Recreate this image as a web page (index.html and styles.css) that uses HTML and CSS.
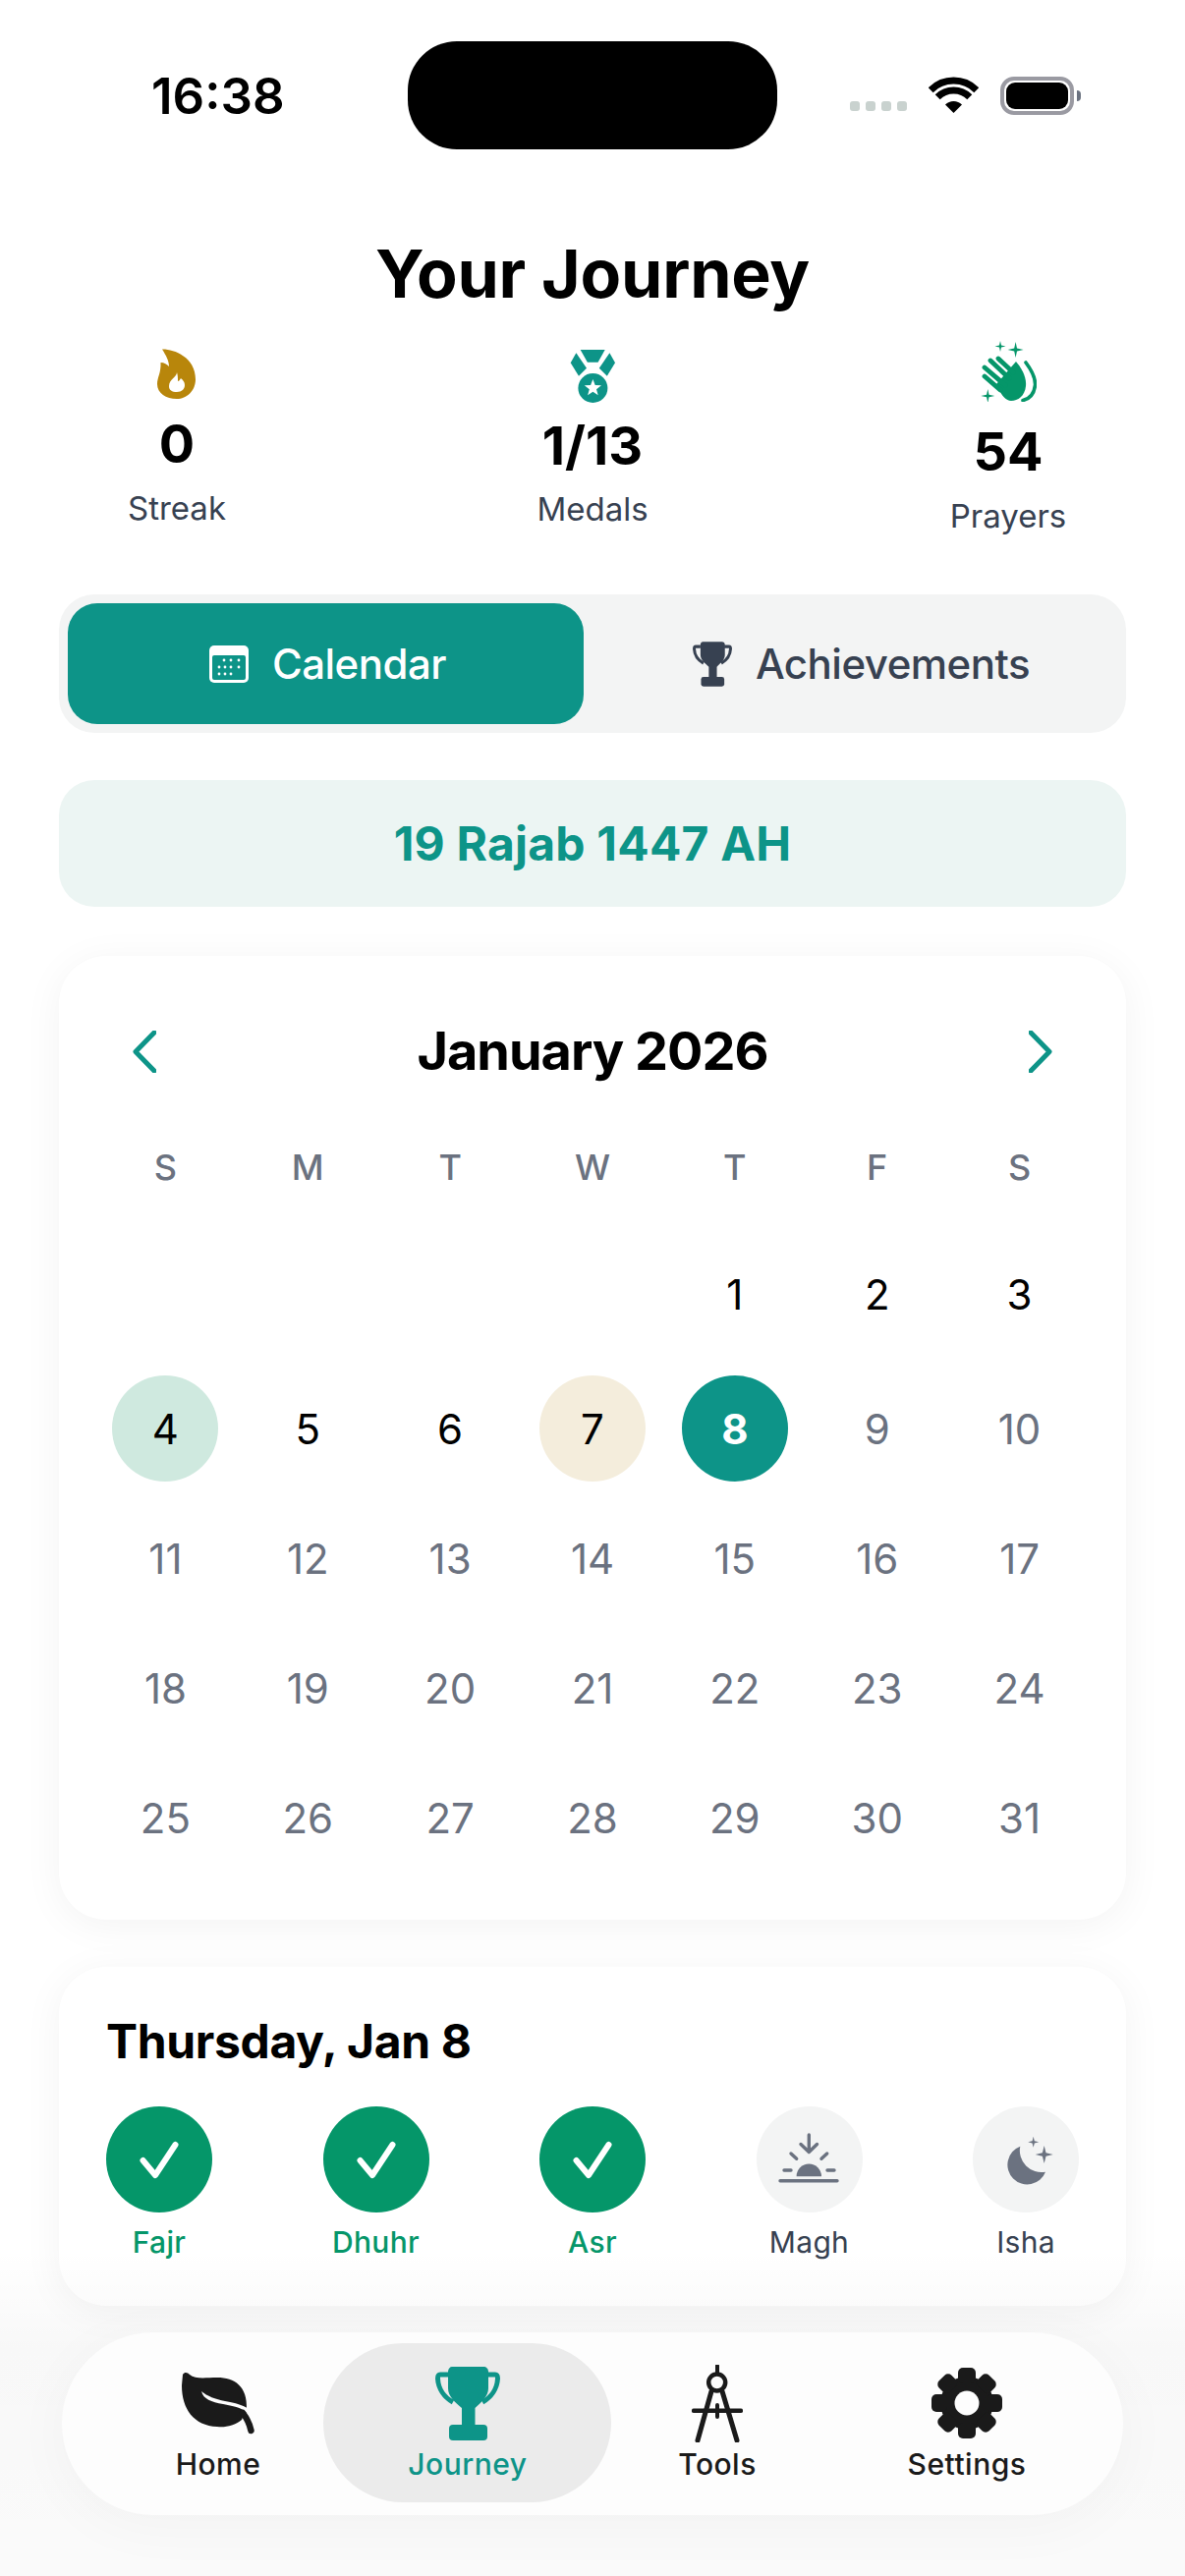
FILE: index.html
```html
<!DOCTYPE html>
<html lang="en">
<head>
<meta charset="utf-8">
<title>Your Journey</title>
<link rel="stylesheet" href="styles.css">
</head>
<body>
<div class="page">
  <header class="status">
    <div class="time">16:38</div>
    <div class="island"></div>
    <div class="status-right">
      <div class="dots"><i></i><i></i><i></i><i></i></div>
      <svg class="wifi" viewBox="0 0 51 37"><path d="M2.2 13.7A33 33 0 0 1 48.8 13.7" fill="none" stroke="#000" stroke-width="7"/><path d="M9.2 20.7A23 23 0 0 1 41.8 20.7" fill="none" stroke="#000" stroke-width="7"/><path d="M25.5 37L17 28.5A12 12 0 0 1 34 28.5Z"/></svg>
      <div class="battery"><div class="battery-fill"></div></div>
    </div>
  </header>

  <h1 class="title">Your Journey</h1>

  <section class="stats">
    <div class="stat stat-streak">
      <svg class="stat-icon" width="40" height="52" viewBox="0 0 40 52"><path fill="#b8860b" fill-rule="evenodd" d="M5 .5C16 0 39 8 39 31C39 43 30 51 20 51C9 51 0 45 0 36C0 29 4 25 3.500 14C7 14 10 16 12 18C12 12 9 7 5 .5ZM20 24C20 29 12 31 12 38C12 42 15 44 20 44C25 44 28 41 28 37C28 33 25 31 24 30C23 32 22 33 21 33C21 30 21 27 20 24Z"/></svg>
      <div class="stat-value">0</div>
      <div class="stat-label">Streak</div>
    </div>
    <div class="stat stat-medal">
      <svg class="stat-icon" width="47" height="54" viewBox="0 0 47 54"><g fill="#0d9488"><path d="M10.700 0H35.700L28.600 12.700H17.900Z"/><path d="M6.400 3.300L.7 13.300L9 26.700L17 18.700Z"/><path d="M40.400 3.300L46 13.300L37.800 26.700L29.800 18.700Z"/><circle cx="23.400" cy="39" r="15"/></g><path fill="#fff" d="M23.400 30L25.700 36L32 36.200L27 40.200L28.700 46.300L23.400 42.800L18.100 46.300L19.800 40.200L14.800 36.200L21.100 36Z"/></svg>
      <div class="stat-value">1/13</div>
      <div class="stat-label">Medals</div>
    </div>
    <div class="stat stat-prayers">
      <svg class="stat-icon" width="57" height="62" viewBox="0 0 57 62"><g fill="#059669"><path d="M20 0L21 4.500L25.500 5.500L21 6.500L20 11L19 6.500L14.500 5.500L19 4.500Z"/><path d="M35.600 1L37 7.600L43.600 9L37 10.400L35.600 17L34.200 10.400L27.600 9L34.200 7.600Z"/><path d="M7.300 49L8.500 54.800L14.300 56L8.500 57.200L7.300 63L6.100 57.200L.3 56L6.100 54.800Z"/><path d="M16 44L29 29L36 21C41 27 47 36 46 46C45 56 38 61 31 61C25 61 20 54 16 44Z"/></g><g fill="none" stroke="#059669" stroke-linecap="round" stroke-width="4.800"><path d="M4 36L20 50"/><path d="M4 27L25 45"/><path d="M10 20L29 38"/><path d="M18 18L33 32"/></g><path fill="none" stroke="#059669" stroke-linecap="round" stroke-width="3.600" d="M46 22C52 30 56 37 55.500 45C54.500 54 50 59 43 60.500"/></svg>
      <div class="stat-value">54</div>
      <div class="stat-label">Prayers</div>
    </div>
  </section>

  <nav class="tabs">
    <div class="tab tab-active">
      <svg class="tab-icon" width="40" height="38" viewBox="0 0 40 38"><rect width="40" height="38" rx="5" fill="#fff"/><rect x="3" y="10" width="34" height="25" rx="2" fill="#0d9488"/><g fill="#fff"><circle cx="15" cy="15" r="1.400"/><circle cx="22" cy="15" r="1.400"/><circle cx="30" cy="15" r="1.400"/><circle cx="10" cy="22" r="1.400"/><circle cx="16" cy="22" r="1.400"/><circle cx="22" cy="22" r="1.400"/><circle cx="30" cy="22" r="1.400"/><circle cx="10" cy="29" r="1.400"/><circle cx="16" cy="29" r="1.400"/><circle cx="22" cy="29" r="1.400"/></g></svg>
      <span>Calendar</span>
    </div>
    <div class="tab">
      <svg class="tab-icon" width="40" height="46" viewBox="0 0 66 75"><g fill="#374151"><path d="M17 0H49C52 0 54 2 54 5V22C54 30 47 36 40.500 42V59H27V42C20 36 13 30 13 22V5C13 2 15 0 17 0Z"/><rect x="14" y="59" width="39" height="16" rx="4"/></g><path fill="none" stroke="#374151" stroke-width="5" d="M13 8H5C2.500 8 2.500 10 2.500 12C3 22 9 31 18 36M53 8H61C63.500 8 63.500 10 63.500 12C63 22 57 31 48 36"/></svg>
      <span>Achievements</span>
    </div>
  </nav>

  <div class="hijri">19 Rajab 1447 AH</div>

  <section class="card calendar">
    <div class="cal-head">
      <svg class="chev" width="24" height="43" viewBox="0 0 24 43"><path d="M22 2L3 21.500L22 41"/></svg>
      <div class="cal-title">January 2026</div>
      <svg class="chev" width="24" height="43" viewBox="0 0 24 43"><path d="M2 2L21 21.500L2 41"/></svg>
    </div>
    <div class="weekdays"><span>S</span><span>M</span><span>T</span><span>W</span><span>T</span><span>F</span><span>S</span></div>
    <div class="days">
      <span></span><span></span><span></span><span></span>
      <span class="day">1</span><span class="day">2</span><span class="day">3</span>
      <span class="day day-green">4</span><span class="day">5</span><span class="day">6</span><span class="day day-gold">7</span><span class="day day-today">8</span><span class="day day-future">9</span><span class="day day-future">10</span>
      <span class="day day-future">11</span><span class="day day-future">12</span><span class="day day-future">13</span><span class="day day-future">14</span><span class="day day-future">15</span><span class="day day-future">16</span><span class="day day-future">17</span>
      <span class="day day-future">18</span><span class="day day-future">19</span><span class="day day-future">20</span><span class="day day-future">21</span><span class="day day-future">22</span><span class="day day-future">23</span><span class="day day-future">24</span>
      <span class="day day-future">25</span><span class="day day-future">26</span><span class="day day-future">27</span><span class="day day-future">28</span><span class="day day-future">29</span><span class="day day-future">30</span><span class="day day-future">31</span>
    </div>
  </section>

  <section class="card today">
    <h2 class="today-title">Thursday, Jan 8</h2>
    <div class="prayers">
      <div class="prayer prayer-done"><div class="prayer-dot"><svg width="108" height="108" viewBox="0 0 108 108"><path class="check" d="M37.500 55L50 70L70.500 39"/></svg></div><div class="prayer-name">Fajr</div></div>
      <div class="prayer prayer-done"><div class="prayer-dot"><svg width="108" height="108" viewBox="0 0 108 108"><path class="check" d="M37.500 55L50 70L70.500 39"/></svg></div><div class="prayer-name">Dhuhr</div></div>
      <div class="prayer prayer-done"><div class="prayer-dot"><svg width="108" height="108" viewBox="0 0 108 108"><path class="check" d="M37.500 55L50 70L70.500 39"/></svg></div><div class="prayer-name">Asr</div></div>
      <div class="prayer"><div class="prayer-dot"><svg width="108" height="108" viewBox="0 0 108 108"><path fill="#6b7280" d="M40.600 71.300A12.700 12.700 0 0 1 66 71.300Z"/><path fill="none" stroke="#6b7280" stroke-width="3.400" stroke-linecap="round" stroke-linejoin="round" d="M24 75.700H82M53.300 29V45M45 38.500L53.300 46.500L61.500 38.500M35 48L40.700 53.300M71.700 48L66 53.300M28 65H35M72 65H79"/></svg></div><div class="prayer-name">Magh</div></div>
      <div class="prayer"><div class="prayer-dot"><svg width="108" height="108" viewBox="0 0 108 108"><path fill="#6b7280" d="M48.300 40.700A20 20 0 1 0 74 66.700A22 22 0 0 1 48.300 40.700Z"/><path fill="#6b7280" d="M72.700 40L74.500 47.200L81.700 49L74.500 50.800L72.700 58L70.900 50.800L63.700 49L70.900 47.200Z"/><path fill="#6b7280" d="M61.700 30.800L62.800 35.200L67.200 36.300L62.800 37.400L61.700 41.800L60.600 37.400L56.200 36.300L60.600 35.200Z"/></svg></div><div class="prayer-name">Isha</div></div>
    </div>
  </section>

  <nav class="tabbar">
    <div class="tabbar-item">
      <div class="tabbar-icon"><svg width="74" height="64" viewBox="0 0 74 64"><path fill="#1a1a1a" d="M1 3C3 0 6 1 8 3C14 8 24 6 36 6C54 6 67 15 66 38L66 42C63 44 62 46 61 49C54 55 44 57 36 56C12 55 0 38 0 14Z"/><path fill="#fdfdfd" d="M20 20C26 25 34 28 44 30C55 32 62 34 68 38L66 42C60 36 52 35 42 33C30 31 22 28 20 20Z"/><path fill="none" stroke="#1a1a1a" stroke-width="6.500" stroke-linecap="round" d="M62 42C66 47 69 53 70.500 60"/></svg></div>
      <div class="tabbar-label">Home</div>
    </div>
    <div class="tabbar-item tabbar-active">
      <div class="tabbar-pill"></div>
      <div class="tabbar-icon"><svg width="66" height="75" viewBox="0 0 66 75"><g fill="#0d9488"><path d="M17 0H49C52 0 54 2 54 5V22C54 30 47 36 40.500 42V59H27V42C20 36 13 30 13 22V5C13 2 15 0 17 0Z"/><rect x="14" y="59" width="39" height="16" rx="4"/></g><path fill="none" stroke="#0d9488" stroke-width="5" d="M13 8H5C2.500 8 2.500 10 2.500 12C3 22 9 31 18 36M53 8H61C63.500 8 63.500 10 63.500 12C63 22 57 31 48 36"/></svg></div>
      <div class="tabbar-label">Journey</div>
    </div>
    <div class="tabbar-item">
      <div class="tabbar-icon"><svg width="52" height="79" viewBox="0 0 52 79"><g fill="none" stroke="#1a1a1a" stroke-linecap="round"><path stroke-width="4" d="M26 1V9"/><circle cx="25.700" cy="18" r="8.500" stroke-width="4.500"/><path stroke-width="5" d="M20 27L6 77M31 27L46 77"/><path stroke-width="4.500" d="M2 46.700H50"/><path stroke-width="4" d="M26 41V53"/></g></svg></div>
      <div class="tabbar-label">Tools</div>
    </div>
    <div class="tabbar-item">
      <div class="tabbar-icon"><svg width="72" height="72" viewBox="0 0 72 72"><g fill="#1a1a1a"><circle cx="36" cy="36" r="27"/><rect x="27" y="0" width="18" height="16" rx="5"/><rect x="27" y="0" width="18" height="16" rx="5" transform="rotate(45 36 36)"/><rect x="27" y="0" width="18" height="16" rx="5" transform="rotate(90 36 36)"/><rect x="27" y="0" width="18" height="16" rx="5" transform="rotate(135 36 36)"/><rect x="27" y="0" width="18" height="16" rx="5" transform="rotate(180 36 36)"/><rect x="27" y="0" width="18" height="16" rx="5" transform="rotate(225 36 36)"/><rect x="27" y="0" width="18" height="16" rx="5" transform="rotate(270 36 36)"/><rect x="27" y="0" width="18" height="16" rx="5" transform="rotate(315 36 36)"/></g><circle cx="36" cy="36" r="12.500" fill="#fdfdfd"/></svg></div>
      <div class="tabbar-label">Settings</div>
    </div>
  </nav>
  <div class="fade"></div>
</div>
</body>
</html>
```

FILE: styles.css
```css
* { box-sizing: border-box; }
html, body { margin: 0; padding: 0; }
body {
  background: #fff;
  color: #000;
  font-family: Inter, "Liberation Sans", sans-serif;
}
.page {
  position: relative;
  width: 1206px;
  height: 2622px;
  overflow: hidden;
  padding-top: 42px;
  background: #fff;
}

/* status bar */
.status {
  display: grid;
  grid-template-columns: 415px 376px 1fr;
  align-items: center;
  height: 110px;
}
.time {
  margin-left: 154px;
  font-size: 51px;
  font-weight: 600;
}
.island { height: 110px; background: #000; border-radius: 50px; }
.status-right {
  display: flex;
  align-items: center;
  padding-left: 74px;
}
.dots { display: flex; gap: 6px; margin-top: 22px; }
.dots i { width: 10px; height: 10px; border-radius: 3px; background: #c9d2cf; }
.wifi { width: 51px; height: 37px; margin-left: 22px; margin-top: -1px; }
.battery {
  position: relative;
  width: 75px;
  height: 39px;
  margin-left: 22px;
  padding: 2px;
  border: 4px solid #9a9aa2;
  border-radius: 14px;
}
.battery::after {
  content: "";
  position: absolute;
  right: -11px;
  top: 10px;
  width: 4px;
  height: 11px;
  background: #6b7280;
  border-radius: 0 4px 4px 0;
}
.battery-fill { width: 100%; height: 100%; background: #000; border-radius: 9px; }

/* title */
.title {
  margin: 86px 0 0;
  font-size: 68px;
  line-height: 80px;
  font-weight: 700;
  letter-spacing: -.2px;
  text-align: center;
}

/* stats */
.stats {
  display: flex;
  justify-content: space-between;
  align-items: flex-start;
  height: 198px;
  margin: 29px 60px 0;
}
.stat { display: flex; flex-direction: column; align-items: center; width: 240px; }
.stat-icon { display: block; }
.stat-streak .stat-icon { margin: 8px 0 15px; }
.stat-medal .stat-icon { margin: 9px 0 14px; }
.stat-prayers .stat-icon { margin: 0 0 21px; }
.stat-value { font-size: 54px; line-height: 60px; font-weight: 700; }
.stat-label { margin-top: 15px; font-size: 33px; line-height: 40px; color: #374151; }
.stat-medal .stat-label { margin-top: 14px; }

/* tabs */
.tabs {
  display: flex;
  gap: 18px;
  height: 141px;
  margin: 60px 60px 0;
  padding: 9px;
  background: #f3f4f4;
  border-radius: 36px;
}
.tab {
  flex: 1;
  display: flex;
  align-items: center;
  justify-content: center;
  gap: 24px;
  padding-left: 4px;
  border-radius: 30px;
  font-size: 42px;
  font-weight: 500;
  letter-spacing: -.5px;
  color: #374151;
}
.tab-active { background: #0d9488; color: #fff; }
.tab-icon { display: block; }

/* hijri */
.hijri {
  height: 129px;
  margin: 48px 60px 0;
  background: #ecf5f3;
  border-radius: 36px;
  font-size: 48px;
  font-weight: 700;
  line-height: 129px;
  letter-spacing: .2px;
  text-align: center;
  color: #0d9488;
}

/* cards */
.card {
  margin: 50px 60px 0;
  background: #fff;
  border-radius: 48px;
  box-shadow: 0 6px 40px rgba(0, 0, 0, .05);
}
.calendar { height: 981px; padding: 67px 36px 0; }
.cal-head {
  display: flex;
  align-items: center;
  justify-content: space-between;
  height: 60px;
  padding: 0 39px;
}
.cal-title { font-size: 54px; font-weight: 700; line-height: 60px; letter-spacing: -1px; }
.chev path { fill: none; stroke: #0d9488; stroke-width: 5; stroke-linecap: round; stroke-linejoin: round; }
.weekdays {
  display: grid;
  grid-template-columns: repeat(7, 1fr);
  margin-top: 66px;
  font-size: 36px;
  line-height: 44px;
  font-weight: 500;
  text-align: center;
  color: #6b7280;
}
.days {
  display: grid;
  grid-template-columns: repeat(7, 1fr);
  grid-template-rows: 113px 108px 108px 108px 108px;
  row-gap: 24.200px;
  margin-top: 53px;
  justify-items: center;
  align-items: start;
}
.day {
  display: flex;
  align-items: center;
  justify-content: center;
  width: 108px;
  height: 108px;
  border-radius: 50%;
  font-size: 42px;
}
.day-green { background: #cfe9df; }
.day-gold { background: #f4eddc; }
.day-today { background: #0d9488; color: #fff; font-weight: 700; }
.day-future { color: #6b7280; }

/* today */
.today { height: 345px; margin-top: 48px; padding: 48px; }
.today-title { margin: 0 0 38px; font-size: 48px; line-height: 56px; font-weight: 700; letter-spacing: -.35px; }
.prayers { display: flex; justify-content: space-between; }
.prayer { display: flex; flex-direction: column; align-items: center; width: 108px; }
.prayer-dot { width: 108px; height: 108px; border-radius: 50%; background: #f3f4f4; }
.prayer-dot svg { display: block; }
.prayer-done .prayer-dot { background: #059669; }
.check { fill: none; stroke: #fff; stroke-width: 6; stroke-linecap: round; stroke-linejoin: round; }
.prayer-name {
  margin-top: 12px;
  font-size: 30px;
  line-height: 36px;
  letter-spacing: .3px;
  color: #374151;
  white-space: nowrap;
}
.prayer-done .prayer-name { color: #059669; font-weight: 500; }

/* bottom tab bar */
.tabbar {
  position: relative;
  z-index: 2;
  display: flex;
  height: 186px;
  margin: 27px 63px 0;
  padding: 32px 32px 0;
  background: #fdfdfd;
  border-radius: 93px;
  box-shadow: 0 10px 60px rgba(0, 0, 0, .035);
}
.tabbar-item {
  position: relative;
  flex: 1;
  display: flex;
  flex-direction: column;
  align-items: center;
}
.tabbar-pill {
  position: absolute;
  top: -21px;
  left: -20px;
  width: 293px;
  height: 162px;
  background: #ebebeb;
  border-radius: 81px;
}
.tabbar-icon {
  position: relative;
  display: flex;
  align-items: center;
  justify-content: center;
  height: 80px;
}
.tabbar-icon svg { display: block; }
.tabbar-label {
  position: relative;
  margin-top: 4px;
  font-size: 30px;
  line-height: 36px;
  font-weight: 500;
  letter-spacing: .5px;
  color: #1a1a1a;
}
.tabbar-active .tabbar-label { color: #0d9488; }
.fade {
  position: absolute;
  left: 0;
  right: 0;
  top: 2290px;
  bottom: 0;
  background: linear-gradient(transparent, rgba(0, 0, 0, .028) 100px, rgba(0, 0, 0, .02));
  pointer-events: none;
}
```
